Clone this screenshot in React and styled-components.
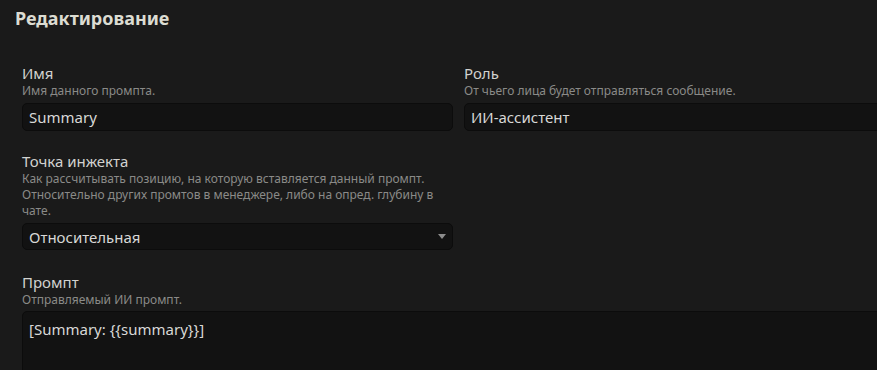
import React from "react";
import styled, { createGlobalStyle } from "styled-components";

const GlobalStyle = createGlobalStyle`
  html, body {
    margin: 0;
    padding: 0;
    background: #1a1a1a;
    overflow: hidden;
  }
  body {
    font-family: "Noto Sans", "Open Sans", sans-serif;
    color: #d4d4d0;
  }
`;

const Page = styled.div`
  width: 877px;
  height: 370px;
  overflow: hidden;
  background: #1a1a1a;
`;

const Title = styled.h3`
  margin: 0;
  padding: 6px 15px 0;
  font-size: 18px;
  font-weight: 700;
  line-height: 24px;
  color: #dcdcd2;
`;

const Form = styled.div`
  padding: 33px 0 0 22px;
  width: 873px;
  display: flex;
  flex-direction: column;
  gap: 20px;
`;

const Row = styled.div`
  display: grid;
  grid-template-columns: 431px 431px;
  column-gap: 11px;
  align-items: start;
`;

const Field = styled.div`
  display: flex;
  flex-direction: column;
  margin-top: ${(p) => (p.$extra ? `${p.$extra}px` : "0")};
`;

const Label = styled.label`
  font-size: 15px;
  line-height: 20px;
  color: #d2d2d0;
`;

const Hint = styled.div`
  font-size: 12px;
  line-height: 16px;
  color: #8a8a88;
  margin-bottom: ${(p) => (p.$tight ? "3px" : "4px")};
`;

const Input = styled.div`
  box-sizing: border-box;
  height: 28px;
  padding: 0 6px;
  display: flex;
  align-items: center;
  background: #121212;
  border: 1px solid #0c0c0c;
  border-radius: 5px;
  font-size: 15px;
  color: #d8d8d6;
  position: relative;
`;

const Select = styled(Input)`
  height: 27px;
`;

const Caret = styled.span`
  position: absolute;
  right: 6px;
  top: 10px;
  width: 0;
  height: 0;
  border-left: 4px solid transparent;
  border-right: 4px solid transparent;
  border-top: 5px solid #8c8c8c;
`;

const TextArea = styled(Input)`
  height: 100px;
  align-items: flex-start;
  padding-top: 7px;
  width: 873px;
  border-radius: 5px 0 0 0;
`;

export default function App() {
  return (
    <Page>
      <GlobalStyle />
      <Title>Редактирование</Title>
      <Form>
        <Row>
          <Field>
            <Label>Имя</Label>
            <Hint>Имя данного промпта.</Hint>
            <Input>Summary</Input>
          </Field>
          <Field>
            <Label>Роль</Label>
            <Hint>От чьего лица будет отправляться сообщение.</Hint>
            <Input>ИИ-ассистент</Input>
          </Field>
        </Row>
        <Row>
          <Field>
            <Label>Точка инжекта</Label>
            <Hint>
              Как рассчитывать позицию, на которую вставляется данный промпт.
              Относительно других промтов в менеджере, либо на опред. глубину в
              чате.
            </Hint>
            <Select>
              Относительная
              <Caret />
            </Select>
          </Field>
        </Row>
        <Field $extra={2}>
          <Label>Промпт</Label>
          <Hint $tight>Отправляемый ИИ промпт.</Hint>
          <TextArea>[Summary: {"{{summary}}"}]</TextArea>
        </Field>
      </Form>
    </Page>
  );
}
